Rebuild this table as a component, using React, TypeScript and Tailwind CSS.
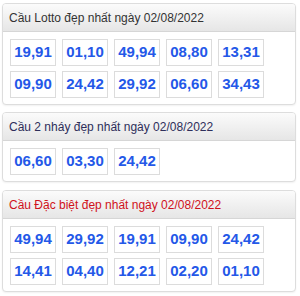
const panels = [
  {
    title: "Cầu Lotto đẹp nhất ngày 02/08/2022",
    color: "text-[#333333]",
    rows: [
      ["19,91", "01,10", "49,94", "08,80", "13,31"],
      ["09,90", "24,42", "29,92", "06,60", "34,43"],
    ],
  },
  {
    title: "Cầu 2 nháy đẹp nhất ngày 02/08/2022",
    color: "text-[#2e2e5a]",
    rows: [["06,60", "03,30", "24,42"]],
  },
  {
    title: "Cầu Đặc biệt đẹp nhất ngày 02/08/2022",
    color: "text-[#d0111b]",
    rows: [
      ["49,94", "29,92", "19,91", "09,90", "24,42"],
      ["14,41", "04,40", "12,21", "02,20", "01,10"],
    ],
  },
]

export default function App() {
  return (
    <div className="w-[300px] h-[296px] bg-white px-[2px] pt-[3px] font-['Liberation_Sans',Arial,sans-serif]">
      <div className="flex w-[294px] flex-col">
        {panels.map((panel, i) => (
          <div
            key={panel.title}
            className={`overflow-hidden rounded-[4px] border border-[#dddddd] bg-white shadow-[0_1px_2px_rgba(0,0,0,0.06)] ${
              i === 1 ? "mt-[7px]" : i === 2 ? "mt-[8px]" : ""
            }`}
          >
            {/* HEADER */}
            <div
              className={`flex h-[28px] items-center border-b border-[#d6d6d6] bg-gradient-to-b from-[#fbfbfb] to-[#e6e6e6] pl-[6px] text-[12px] ${panel.color}`}
            >
              {panel.title}
            </div>

            {/* NUMBERS */}
            <div className="flex flex-col gap-[5px] px-[7px] pt-[7px] pb-[6px]">
              {panel.rows.map((row, r) => (
                <div key={r} className="flex gap-[6px]">
                  {row.map((n, k) => (
                    <div
                      key={k}
                      className="flex h-[27px] w-[46px] items-center justify-center border border-[#dcdcdc] bg-white text-[15px] font-bold text-[#2458e8]"
                    >
                      {n}
                    </div>
                  ))}
                </div>
              ))}
            </div>
          </div>
        ))}
      </div>
    </div>
  )
}
